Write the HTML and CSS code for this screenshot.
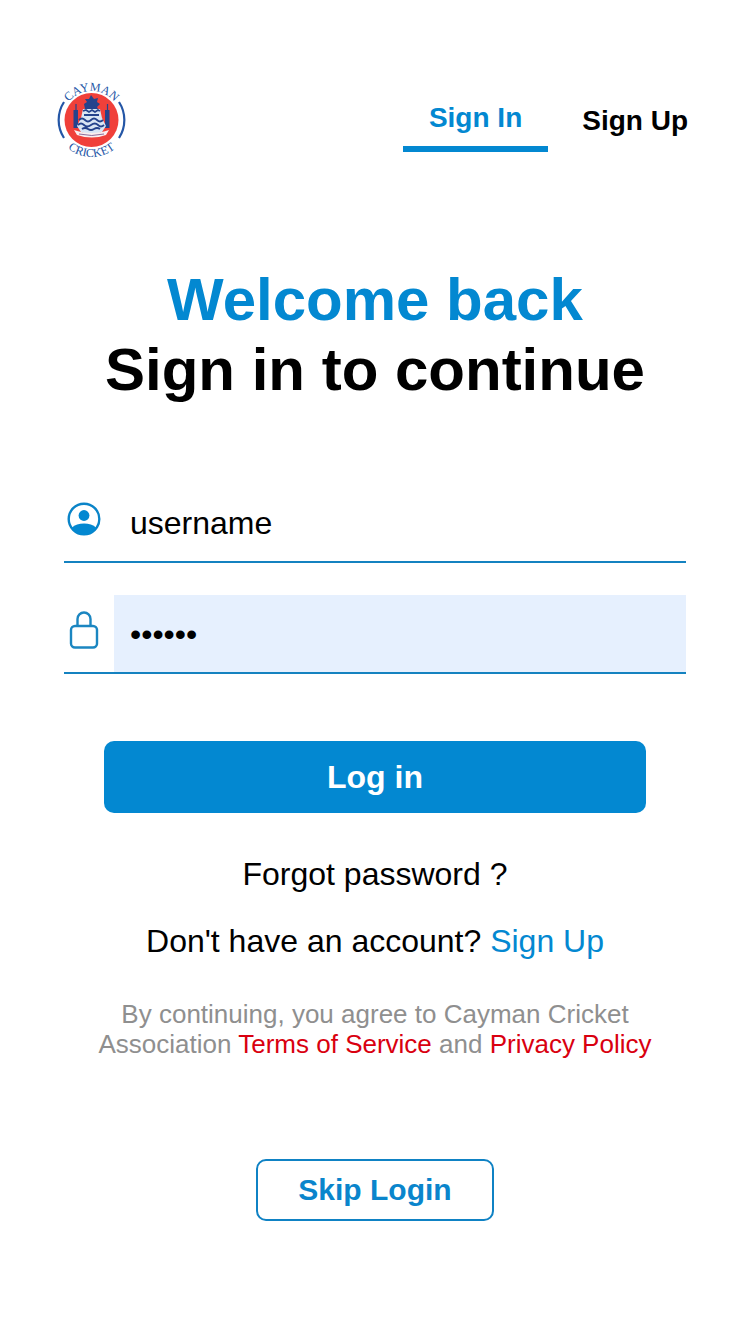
FILE: index.html
```html
<!DOCTYPE html>
<html lang="en">
<head>
    <meta charset="UTF-8">
    <meta name="viewport" content="width=device-width, initial-scale=1.0">
    <title>Cayman Cricket - Sign In</title>
    <link rel="stylesheet" href="styles.css">
</head>
<body>
    <header class="header">
        <svg class="logo" viewBox="0 0 72 80" role="img" aria-label="Cayman Cricket">
            <defs>
                <path id="arcTop" d="M6.500 40 A29 29 0 0 1 64.500 40"/>
                <path id="arcBottom" d="M-1.500 40 A37 37 0 0 0 72.500 40"/>
            </defs>
            <circle cx="35.500" cy="40" r="27" fill="#f0403a"/>
            <!-- side arcs -->
            <path d="M8 22 A33 33 0 0 0 8 58 M63 22 A33 33 0 0 1 63 58" fill="none" stroke="#2456a6" stroke-width="2.200"/>
            <!-- wickets -->
            <path d="M17.500 30h4.500v18h-4.500z M49 30h4.500v18h-4.500z" fill="#24438c"/>
            <path d="M20 24v7 M51.500 24v7" stroke="#24438c" stroke-width="1.200"/>
            <!-- crest -->
            <path d="M28 24l3-2-2-3 4 0 2-4 3 4 4-1-1 4 3 2-3 3 1 2H29z" fill="#24438c"/>
            <path d="M27 29h17l2 9 4 8-4 6q-10 5-21 0l-4-6 4-8z" fill="#d9e6f4"/>
            <path d="M27 31l3-1 3 2 3-2 3 2 3-2 2 1 M28 35h15 M23 40q3-3 6 0t6 0 6 0 6 0 M22 45q3-3 6 0t7 0 7 0 6 0 M26 49q3-2 6 0t6 0 6 0" fill="none" stroke="#24438c" stroke-width="1.800"/>
            <path d="M18 50q8 3 17.500 3T53 50l-3 5q-14 5-29 0z" fill="#fbeeee"/>
            <path d="M23 54q13 3 25 0" fill="none" stroke="#8c6f9c" stroke-width="1"/>
            <text class="logo-text"><textPath href="#arcTop" startOffset="50%">CAYMAN</textPath></text>
            <text class="logo-text"><textPath href="#arcBottom" startOffset="50%">CRICKET</textPath></text>
        </svg>
        <nav class="tabs">
            <a class="tab active" href="#signin">Sign In</a>
            <a class="tab" href="#signup">Sign Up</a>
        </nav>
    </header>

    <main class="content">
        <h1 class="title"><span class="welcome">Welcome back</span><br>Sign in to continue</h1>

        <form class="login-form">
            <div class="field">
                <label class="field-icon" for="username" aria-label="Username">
                    <svg class="icon-user" viewBox="0 0 34 34">
                        <circle cx="17" cy="17" r="15.300" fill="none" stroke="#0a84c8" stroke-width="2.400"/>
                        <circle cx="17" cy="13.500" r="5.400" fill="#0388d1"/>
                        <path d="M4.500 26C8 22.500 12 21.500 17 21.500s9 1 12.500 4.500C26.500 30.500 22 33 17 33S7.500 30.500 4.500 26z" fill="#0388d1"/>
                    </svg>
                </label>
                <input type="text" id="username" value="username">
            </div>
            <div class="field">
                <label class="field-icon" for="password" aria-label="Password">
                    <svg class="icon-lock" viewBox="0 0 30 40" fill="none" stroke="#1b86c1" stroke-width="2.400">
                        <rect x="2" y="16" width="26" height="21.500" rx="4"/>
                        <path d="M8.500 16V9a6.500 6.500 0 0 1 13 0v7"/>
                    </svg>
                </label>
                <input type="password" id="password" class="autofilled" value="123456">
            </div>
            <button type="submit" class="btn-login">Log in</button>
        </form>

        <a class="forgot" href="#forgot">Forgot password ?</a>
        <p class="no-account">Don't have an account? <a href="#signup">Sign Up</a></p>
        <p class="terms">By continuing, you agree to Cayman Cricket Association <a href="#terms">Terms of Service</a> and <a href="#privacy">Privacy Policy</a></p>
        <button type="button" class="btn-skip">Skip Login</button>
    </main>
</body>
</html>
```
FILE: styles.css
```css
* {
    box-sizing: border-box;
}

body {
    margin: 0;
    background: #fff;
    color: #000;
    font-family: "Liberation Sans", Arial, Helvetica, sans-serif;
    font-size: 32px;
}

a {
    color: inherit;
    text-decoration: none;
}

/* header */
.header {
    display: flex;
    justify-content: space-between;
    align-items: center;
    padding: 80px 36px 0 56px;
}

.logo {
    width: 72px;
    height: 80px;
    overflow: visible;
}

.logo-text {
    font-family: "Liberation Serif", "Times New Roman", serif;
    font-size: 12px;
    fill: #2456a6;
    text-anchor: middle;
}

.tabs {
    display: flex;
    align-items: center;
    padding-top: 14px;
    gap: 8px;
}

.tab {
    padding: 0 26px 12px;
    font-size: 28px;
    font-weight: bold;
    line-height: 32px;
}

.tab.active {
    border-bottom: 6px solid #0388d1;
    color: #0388d1;
}

/* content */
.content {
    display: flex;
    flex-direction: column;
    align-items: center;
    padding: 0 64px 64px;
    text-align: center;
}

.title {
    margin: 105px 0 79px;
    font-size: 60px;
    line-height: 70px;
}

.welcome {
    color: #0388d1;
}

.login-form {
    width: 100%;
}

.field {
    display: flex;
    align-items: stretch;
    height: 79px;
    margin-bottom: 32px;
    border-bottom: 2px solid #1482c0;
}

.field-icon {
    display: flex;
    justify-content: center;
    align-items: center;
    width: 40px;
    margin-right: 10px;
    padding-bottom: 8px;
}

.icon-user {
    width: 34px;
    height: 34px;
}

.icon-lock {
    width: 30px;
    height: 40px;
}

.field input {
    flex: 1;
    min-width: 0;
    padding: 2px 16px 0;
    border: 0;
    outline: 0;
    background: transparent;
    color: #000;
    font: inherit;
}

.field .autofilled {
    background: #e6f0fe;
}

.btn-login {
    display: block;
    width: calc(100% - 80px);
    height: 72px;
    margin: 67px auto 0;
    border: 0;
    border-radius: 10px;
    background: #0388d1;
    color: #fff;
    font: inherit;
    font-weight: bold;
}

.forgot {
    margin-top: 43px;
    line-height: 36px;
}

.no-account {
    margin: 31px 0 0;
    line-height: 36px;
}

.no-account a {
    color: #0388d1;
}

.terms {
    max-width: 580px;
    margin: 40px 0 0;
    color: #8f8f8f;
    font-size: 26px;
    line-height: 30px;
}

.terms a {
    color: #d9000f;
}

.btn-skip {
    margin-top: 100px;
    padding: 10px 40px;
    border: 2px solid #0f82c4;
    border-radius: 10px;
    background: #fff;
    color: #0a85cc;
    font-family: inherit;
    font-size: 30px;
    font-weight: bold;
    line-height: 38px;
}
```
